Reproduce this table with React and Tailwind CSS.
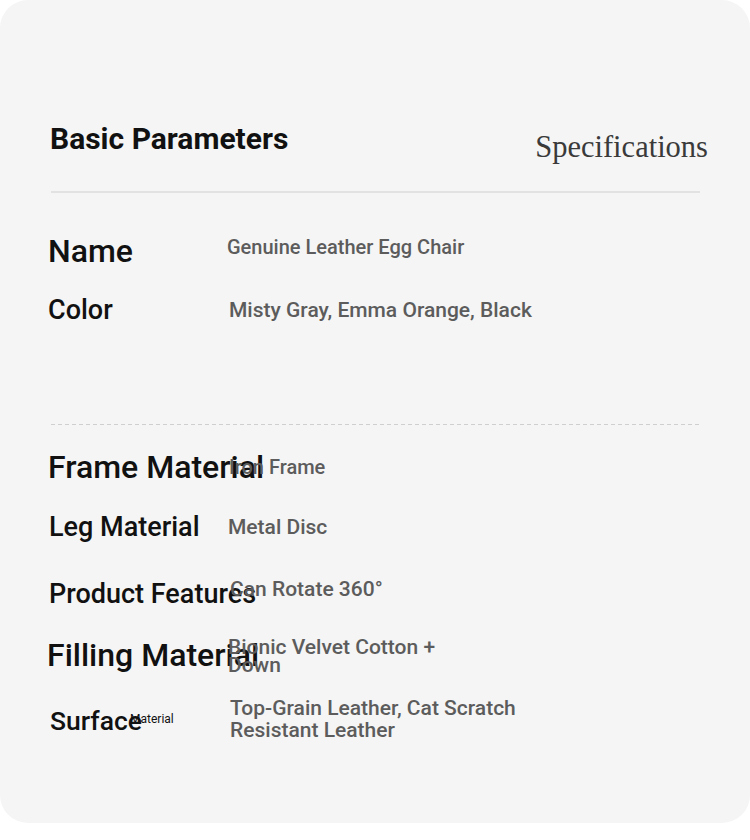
import React from 'react';

const Row = ({ label, value, h, labelSize, valueClass = '', children }) => (
  <div className={`flex items-center ${h}`}>
    <div className={`w-[180px] shrink-0 whitespace-nowrap leading-none font-medium text-[#111] ${labelSize}`}>
      {label}
      {children}
    </div>
    <div className={`font-medium text-[#5c5c5c] ${valueClass}`}>{value}</div>
  </div>
);

const App = () => {
  return (
    <div className="w-[750px] h-[840px] bg-white" style={{ fontFamily: 'Roboto, "Liberation Sans", sans-serif' }}>
      <div className="w-[750px] h-[823px] bg-[#f5f5f5] rounded-[28px] pt-[123px] px-[48px]">
        {/* Header */}
        <div className="flex items-start justify-between pl-[2px]">
          <h1 className="text-[30px] font-bold leading-none text-[#111] mt-[1px]">Basic Parameters</h1>
          <span
            className="mt-[9px] mr-[-6px] text-[30.5px] leading-none text-[#3a3a3a]"
            style={{ fontFamily: '"Liberation Serif", "DejaVu Serif", serif' }}
          >
            Specifications
          </span>
        </div>
        <div className="mt-[28.5px] ml-[3px] mr-[2px] h-[2px] bg-[#e2e2e2]" />

        {/* Section 1 */}
        <div className="mt-[27.5px]">
          <Row label="Name" value="Genuine Leather Egg Chair" h="h-[60px]" labelSize="text-[32px]" valueClass="text-[20px] leading-none mb-[8px] ml-[-1px]" />
          <Row label="Color" value="Misty Gray, Emma Orange, Black" h="h-[59px]" labelSize="text-[27px]" valueClass="text-[21px] leading-none ml-[1px]" />
        </div>

        <div className="mt-[84px] ml-[3px] mr-[2px] h-[1.5px] bg-[repeating-linear-gradient(90deg,#cfcfcf_0_4px,transparent_4px_7px)]" />

        {/* Section 2 */}
        <div className="mt-[11.5px]">
          <Row label="Frame Material" value="Iron Frame" h="h-[60px]" labelSize="text-[32px]" valueClass="text-[20px] leading-none ml-[1px]" />
          <Row label="Leg Material" value="Metal Disc" h="h-[62px]" labelSize="text-[27px] pl-[1px]" valueClass="text-[21px] leading-none" />
          <Row label="Product Features" value="Can Rotate 360°" h="h-[71px]" labelSize="text-[27px] pl-[1px]" valueClass="text-[21px] leading-none mb-[9px] ml-[2px]" />
          <Row label="Filling Material" value="Bionic Velvet Cotton + Down" h="h-[50px]" labelSize="text-[32px] ml-[-1px]" valueClass="text-[21px] leading-[18px] w-[240px] ml-[1px] mt-[2px]" />
          <Row label="Surface" value="Top-Grain Leather, Cat Scratch Resistant Leather" h="h-[84px]" labelSize="text-[26.5px] pl-[2px]" valueClass="text-[21px] leading-[22px] w-[300px] ml-[2px] mb-[6px]">
            <span className="text-[12px] ml-[-12px] align-[7px] font-normal">Material</span>
          </Row>
        </div>
      </div>
    </div>
  );
};

export default App;
